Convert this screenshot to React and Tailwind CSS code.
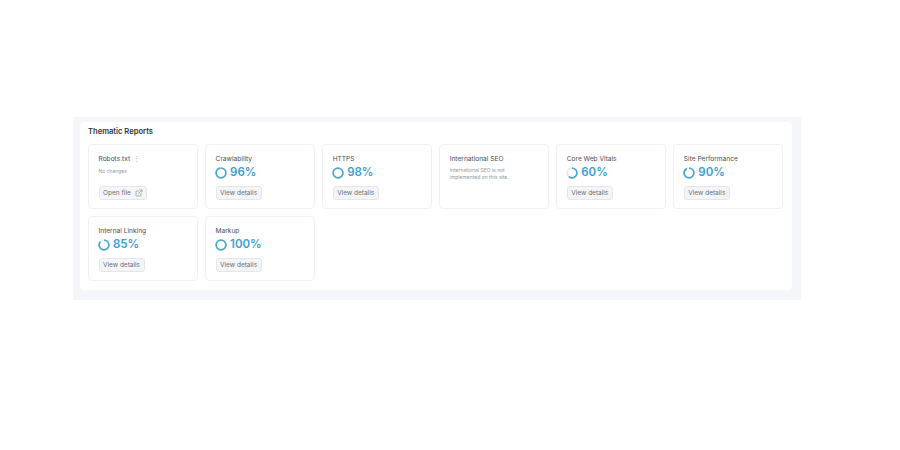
import { ExternalLink } from "lucide-react";

const reports = [
  { name: "Crawlability", score: 96 },
  { name: "HTTPS", score: 98 },
  { name: "International SEO", note: "International SEO is not implemented on this site." },
  { name: "Core Web Vitals", score: 60 },
  { name: "Site Performance", score: 90 },
  { name: "Internal Linking", score: 85 },
  { name: "Markup", score: 100 },
];

function Ring({ score }) {
  const len = 2 * Math.PI * 4.9;
  return (
    <svg width="12" height="12" viewBox="0 0 12 12" className="-ml-px shrink-0 -rotate-90">
      <circle cx="6" cy="6" r="4.9" fill="none" stroke={score < 70 ? "#f3e2df" : "#eceef1"} strokeWidth="1.7" />
      <circle
        cx="6"
        cy="6"
        r="4.9"
        fill="none"
        stroke="#4aa9d2"
        strokeWidth="1.7"
        strokeDasharray={`${(len * score) / 100} ${len}`}
      />
    </svg>
  );
}

function Card({ children }) {
  return (
    <div className="flex h-[65px] flex-col items-start rounded-[4px] border border-[#f0f1f4] bg-white pl-[9.5px] pr-2 pt-[10px]">
      {children}
    </div>
  );
}

function Button({ children, className }) {
  return (
    <div className={`flex h-[13.5px] items-center gap-[4px] rounded-[3px] border border-[#e4e6ea] bg-[#f4f5f7] px-[3.5px] text-[6.5px] leading-none text-[#6b7077] ${className}`}>
      {children}
    </div>
  );
}

export default function App() {
  return (
    <div className="h-[450px] w-[900px] bg-white pl-[73px] pt-[117px] font-['Inter',sans-serif]">
      <div className="h-[183px] w-[728px] bg-[#f4f6fa] pb-[10px] pl-[7px] pr-[9px] pt-[5px]">
        <div className="h-[168px] rounded-[4px] bg-white pl-[8px] pr-[9px] pt-[2px]">
          <h2 className="flex h-[20px] items-center pb-[6px] text-[7.6px] font-semibold leading-[9px] text-[#2f333b]">
            Thematic Reports
          </h2>
          <div className="grid grid-cols-6 gap-x-[7.4px] gap-y-[7px]">
            <Card>
              <div className="flex items-center gap-[3px] text-[6.6px] leading-[9px] text-[#4a4e56]">
                Robots.txt <span className="text-[#a5aab1]">⋮</span>
              </div>
              <p className="mt-[4px] text-[5px] leading-[7px] text-[#94989f]">No changes</p>
              <Button className="mt-[11px]">
                Open file <ExternalLink size={8} strokeWidth={1.5} />
              </Button>
            </Card>
            {reports.map((r) => (
              <Card key={r.name}>
                <p className="text-[6.6px] leading-[9px] text-[#4a4e56]">{r.name}</p>
                {r.note ? (
                  <p className="mt-[3px] w-[70px] text-[5px] leading-[7px] text-[#94989f]">{r.note}</p>
                ) : (
                  <>
                    <div className="mt-[1px] flex h-[15px] items-center gap-[3.5px]">
                      <Ring score={r.score} />
                      <span className="text-[11.5px] font-semibold leading-none text-[#3a9fd1]">{r.score}%</span>
                    </div>
                    <Button className="mt-[6px]">View details</Button>
                  </>
                )}
              </Card>
            ))}
          </div>
        </div>
      </div>
    </div>
  );
}
